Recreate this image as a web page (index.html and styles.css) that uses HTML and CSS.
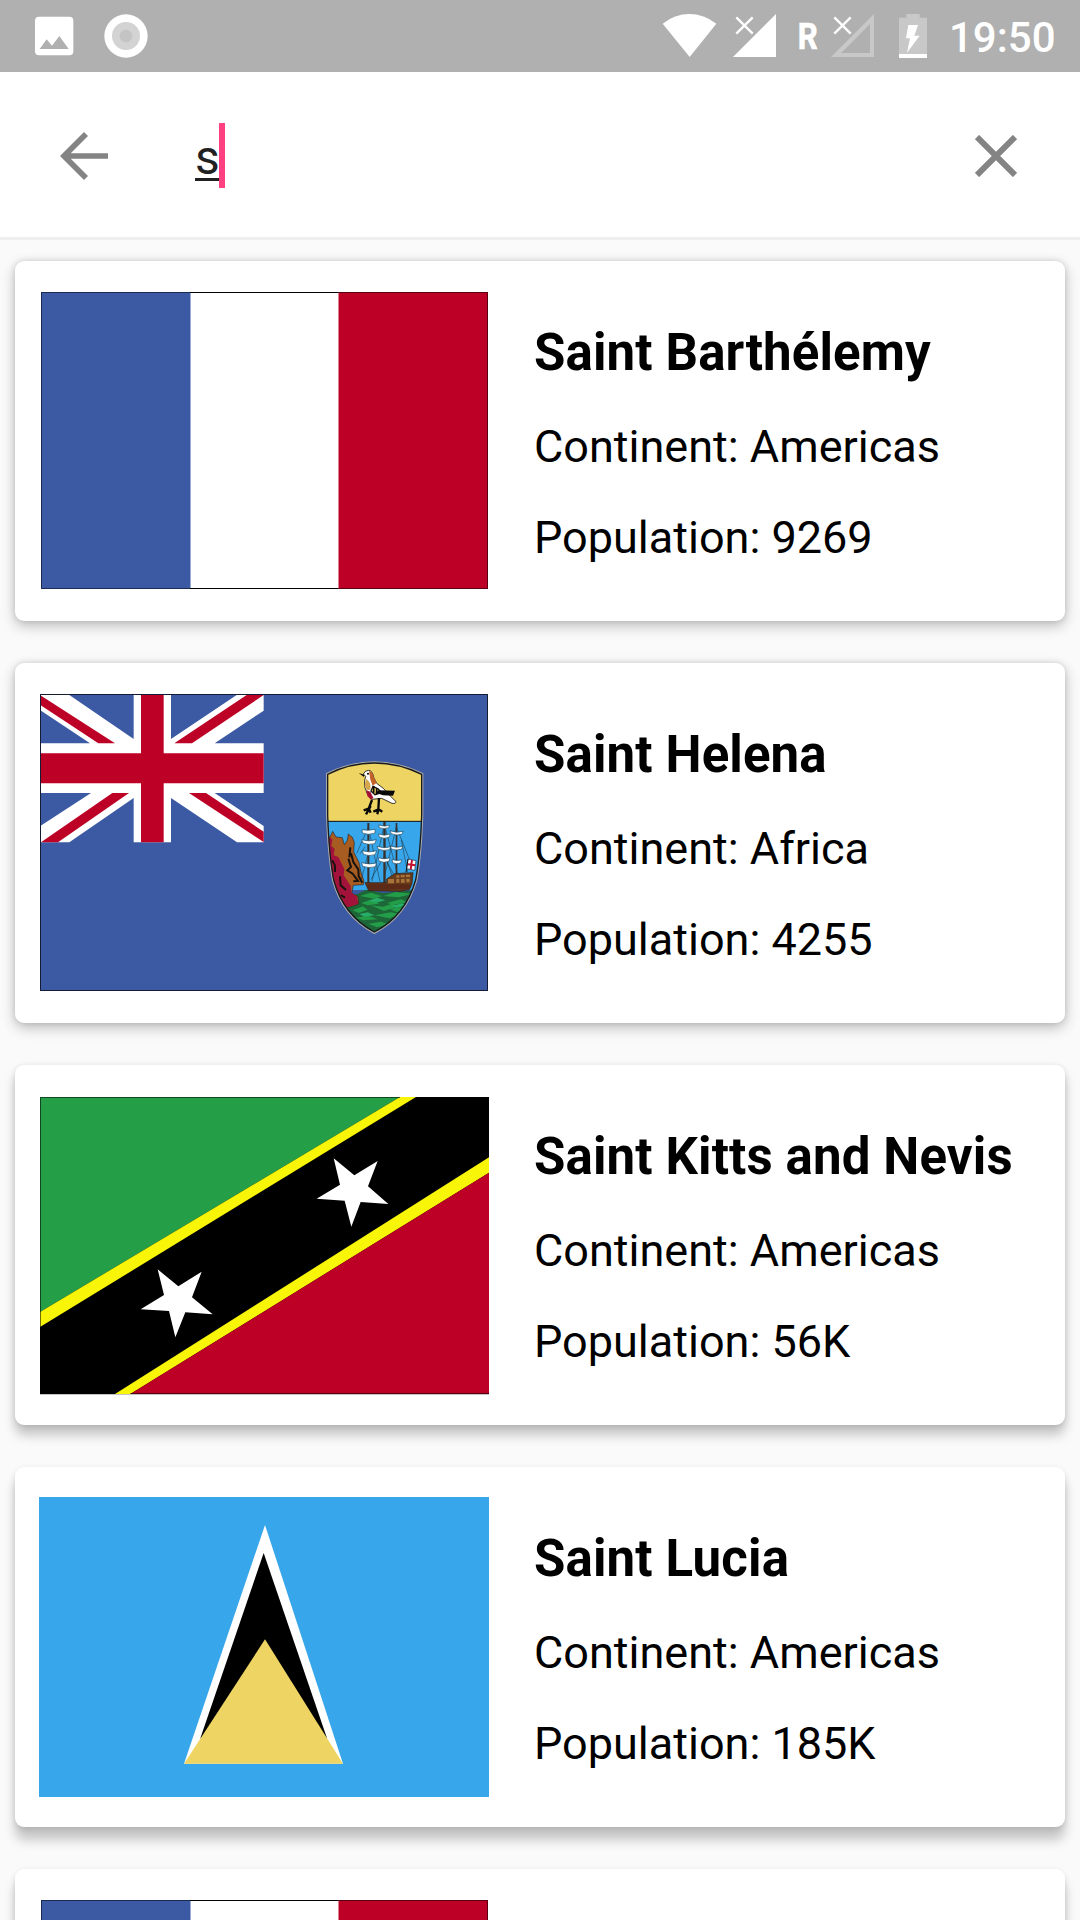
FILE: index.html
```html
<!DOCTYPE html>
<html lang="en">
<head>
<meta charset="utf-8">
<title>Countries</title>
<link rel="stylesheet" href="styles.css">
</head>
<body>
<header class="status">
  <svg class="status-left" viewBox="0 0 600 216">
    <path fill="#fff" fill-rule="evenodd" d="M117 50H208Q220 50 220 62V154Q220 166 208 166H117Q105 166 105 154V62Q105 50 117 50ZM119 147H206L178 108L156 137L140 118Z"/>
    <circle cx="378" cy="108" r="65" fill="#fff"/><circle cx="378" cy="108" r="42" fill="#d3d3d3"/><circle cx="378" cy="108" r="19" fill="#c4c4c4"/>
  </svg>
  <svg class="status-right" viewBox="0 0 900 216">
    <path fill="#fff" d="M68 71Q104 42 148 42T229 71L149 171Z"/>
    <path fill="#fff" d="M408 42V171H279Z"/>
    <path stroke="#fff" stroke-width="7" fill="none" d="M289 52L338 101M338 52L289 101M583 52L632 101M632 52L583 101"/>
    <text class="roaming" x="473" y="147" textLength="60" lengthAdjust="spacingAndGlyphs">R</text>
    <path fill="#c8c8c8" fill-rule="evenodd" d="M702 42V171H573ZM690 72L604 159H690Z"/>
    <path fill="#c8c8c8" d="M799 42H839V53H861V162H777V53H799Z"/>
    <path fill="#fff" d="M777 162H861V174H777ZM805 75H834L823 107H839L801 158L810 115H798Z"/>
  </svg>
  <span class="clock">19:50</span>
</header>

<div class="toolbar">
  <svg class="back" viewBox="0 0 144 144" fill="none" stroke="#848484" stroke-width="17"><path d="M78 6L12 72L78 138M12 72H144"/></svg>
  <div class="query"><span class="typed">s</span><span class="caret"></span></div>
  <svg class="clear" viewBox="0 0 126 126" fill="none" stroke="#848484" stroke-width="18"><path d="M6 6L120 120M120 6L6 120"/></svg>
</div>

<main class="list">
  <article class="card">
    <svg class="flag" viewBox="0 0 450 300">
      <path fill="#3c5aa3" d="M2 1H151.500V298H2Z"/><path fill="#bd0025" d="M299.500 1H449V298H299.500Z"/>
      <path fill="none" stroke="#000" d="M151 1.500H299.500M151 297.500H299.500"/>
      <path fill="none" stroke="#1c2b50" d="M151 1.500H2.500V297.500H151"/>
      <path fill="none" stroke="#590011" d="M299.500 1.500H448.500V297.500H299.500"/>
    </svg>
    <div class="info"><h2>Saint Barthélemy</h2><p>Continent: Americas</p><p>Population: 9269</p></div>
  </article>

  <article class="card">
    <svg class="flag" viewBox="0 0 1350 900">
      <path fill="#3c5aa3" d="M3 3H1347V894H3Z"/>
      <g transform="translate(-57 -39)">
        <path fill="#fff" d="M61 45H148L341 177V45H453V177L650 45H731V92L584 190H731V339H584L731 438V487H651L453 354V487H341V354L148 487H61V438L213 339H61V190H210L61 91Z"/>
        <path fill="#bd0025" d="M363 45H431V220H731V310H431V487H363V310H61V220H363ZM61 46L285 190H235L61 75ZM680 45H731L516 190H463ZM327 339L114 487H63L277 339ZM507 339H558L731 455V486Z"/>
      </g>
      <path fill="none" stroke="#141c33" stroke-width="3" d="M4.500 4.500H1345.500V892.500H4.500Z"/>
      <g transform="translate(783 141)">
        <clipPath id="shield"><path d="M81 102Q150 67 223 67T367 102V225Q363 345 349 421Q318 530 223 579Q128 528 99 421Q85 345 81 225Z"/></clipPath>
        <g clip-path="url(#shield)">
          <path fill="#eed463" d="M75 60H375V244H75Z"/>
          <path fill="#38a6ea" d="M75 244H375V450H75Z"/>
          <path fill="#1d6637" d="M75 470L170 463L198 449L250 459L375 447V590H75Z"/>
          <path fill="#249d48" d="M180 468l32-10 34 10-24 8zM250 468l36-12 52 5-42 11zM184 489l28-10 26 12-35 5zM260 489l42-11 21 8-40 8zM158 511l31-12 14 10-27 10zM212 496l37 4 26-9 20 8-43 14zM224 526l48-9 30 6-34 12zM167 533l38-6 28 11-43 3zM205 551l37-6 27 8-38 9zM270 507l31-6 20 7-31 8z"/>
          <path fill="#28ad68" d="M206 482l25-9 25 8-27 7zM275 498l32-8 14 6-33 7zM178 522l25-5 21 9-32 4z"/>
          <path fill="#a75c22" stroke="#111" stroke-width="1.500" d="M80 298L91 289L98 274L108 291L127 293L133 314L142 300L145 282L157 292L163 307L161 336L177 367L183 397L192 424L190 434L160 436L155 460L174 470L176 492L150 501L120 500L80 440Z"/>
          <path fill="#a3123a" d="M80 303L91 292L97 300L94 318L104 326L101 346L115 351L124 369L133 386L131 406L143 424L152 438L154 458L170 468L175 491L142 502L115 490L80 440Z"/>
          <path fill="#a75c22" d="M104 300L116 302L124 330L119 346L109 328ZM122 352L133 366L139 392L130 380ZM139 410L151 428L147 430Z"/>
          <path fill="none" stroke="#17120d" stroke-width="6" d="M97 361L105 377V396M120 409L122 436L138 450M122 465L135 473M145 356L153 381L142 391L158 401L174 423L160 424M153 340L160 366L175 388L176 409L187 428M151 322L148 352"/>
          <path fill="none" stroke="#18292f" stroke-width="1.500" d="M205 262L170 340M205 262L240 425M205 340L182 425M253 253L216 424M253 253L296 415M289 260L253 410M289 260L329 360M253 340L282 425M180 341L195 321M213 418L252 350L286 412M304 300L323 397"/>
          <path fill="#3a302a" d="M202 249H208V432H202ZM250 245H257V430H250ZM287 249H292V405H287Z"/>
          <path fill="#fff" stroke="#244b60" stroke-width="2" d="M186 269Q205 273 225 268V279Q206 287 187 279ZM185 299Q206 306 229 299L224 311Q205 316 189 309ZM188 332Q207 339 230 332L225 344Q207 350 190 343ZM185 368Q208 375 230 369L226 380Q207 386 188 379ZM236 255Q253 261 269 256L266 263Q252 269 238 263ZM235 282Q253 289 271 282L267 292Q252 298 238 291ZM231 319Q252 327 273 320L268 329Q252 334 235 328ZM235 353Q252 360 270 353L267 364Q251 370 237 363ZM270 272Q289 280 310 274L305 283Q288 288 274 281ZM271 318Q289 325 309 319L304 328Q287 332 274 327ZM276 358Q289 365 305 359L302 369Q289 374 278 368Z"/>
          <path fill="#683b1b" stroke="#2b180d" stroke-width="2" d="M195 428H260V417L284 401L339 398L336 431L329 448L302 454L206 452Z"/>
          <path fill="#5d2a18" d="M199 431L332 433L328 447L206 450Z"/>
          <path fill="#a8743a" d="M264 417H282V430H264ZM289 406H298V413H289ZM302 405H314V412H302ZM318 404H330V411H318ZM289 417H298V428H289ZM303 417H314V428H303ZM319 416H329V427H319Z"/>
          <path fill="#fff" stroke="#173044" stroke-width="2" d="M324 357L348 362L344 391L320 386Z"/>
          <path stroke="#c51230" stroke-width="6" d="M336 360L332 389M323 373L346 376"/>
          <path stroke="#111" stroke-width="3" d="M81 244H367M324 357L318 397"/>
          <path fill="#fff" stroke="#111" stroke-width="2.500" d="M190 102Q195 91 206 91Q218 92 221 112L230 130L250 145L267 164L287 184Q289 192 276 190L245 175L215 178Q198 161 194 140Q192 120 197 109Z"/>
          <path fill="#c4622a" d="M207 92Q219 94 221 112L230 128L218 137L211 119Z"/>
          <path fill="#d5a54b" d="M198 116Q215 126 211 149L201 151L194 137Z"/>
          <path fill="#a41335" d="M199 151L211 155L220 173L213 179L202 168Z"/>
          <path fill="#eed463" stroke="#111" stroke-width="4" d="M219 139L235 147L244 158L225 164L213 153Z"/>
          <path fill="#080808" d="M176 99L193 104L192 111ZM236 151L285 152L279 167L249 166L226 158Z"/>
          <path fill="none" stroke="#080808" stroke-width="7" d="M216 180L206 206M237 174L235 208M191 211L208 205L198 223M206 205L212 218M220 215L236 208L247 215M235 208L232 223"/>
          <path fill="none" stroke="#080808" stroke-width="5" d="M221 139V158M230 145V163"/>
          <circle cx="204" cy="101" r="3"/>
        </g>
        <path fill="none" stroke="#aaa9a6" stroke-width="4" d="M80 101Q150 66 223 66T368 101V225Q364 345 350 421Q319 530 223 580Q127 529 98 421Q84 345 80 225Z"/>
        <path fill="none" stroke="#171b1d" stroke-width="4" d="M83 103Q150 69 223 69T365 103V225Q361 345 347 420Q316 528 223 576Q130 526 101 420Q87 345 83 225Z"/>
      </g>
    </svg>
    <div class="info"><h2>Saint Helena</h2><p>Continent: Africa</p><p>Population: 4255</p></div>
  </article>

  <article class="card raised">
    <svg class="flag" viewBox="57 45 1350 900">
      <path fill="#000" d="M60 51H1407V942H60Z"/>
      <path fill="#259e48" d="M60 51H1140L60 696Z"/>
      <path fill="#f8f509" d="M1140 51H1188L60 741V696ZM1407 232V278L331 942H285Z"/>
      <path fill="#bd0025" d="M1407 278V942H331Z"/>
      <path fill="#fff" d="M941 235L1003 286L1073 243L1044 319L1105 372L1022 366L994 440L974 362L890 356L960 314ZM413 568L475 619L545 575L516 652L578 703L496 697L466 772L447 693L362 688L432 645Z"/>
      <path fill="none" stroke="#000" stroke-opacity=".55" stroke-width="3" d="M1140 52.500H61.500V942M331 940.500H1407"/>
      <path fill="none" stroke="#c4c4c4" stroke-width="3" d="M60 943.500H1407"/>
    </svg>
    <div class="info"><h2>Saint Kitts and Nevis</h2><p>Continent: Americas</p><p>Population: 56K</p></div>
  </article>

  <article class="card high">
    <svg class="flag" viewBox="57 51 1350 900">
      <path fill="#38a6ea" d="M57 51H1407V951H57Z"/>
      <path fill="#fff" d="M735 135L969 851H492Z"/>
      <path fill="#000" d="M731 219L921 775H541Z"/>
      <path fill="#eed463" d="M735 478L969 851H492Z"/>
    </svg>
    <div class="info"><h2>Saint Lucia</h2><p>Continent: Americas</p><p>Population: 185K</p></div>
  </article>

  <article class="card high">
    <svg class="flag" viewBox="0 0 450 300">
      <path fill="#3c5aa3" d="M2 1H151.500V298H2Z"/><path fill="#bd0025" d="M299.500 1H449V298H299.500Z"/>
      <path fill="none" stroke="#000" d="M151 1.500H299.500M151 297.500H299.500"/>
      <path fill="none" stroke="#1c2b50" d="M151 1.500H2.500V297.500H151"/>
      <path fill="none" stroke="#590011" d="M299.500 1.500H448.500V297.500H299.500"/>
    </svg>
  </article>
</main>
</body>
</html>
```
FILE: styles.css
```css
* { box-sizing: border-box; }
body {
  margin: 0;
  height: 1920px;
  overflow: hidden;
  display: flex;
  flex-direction: column;
  background: #fafafa;
  color: #000;
  font-family: Roboto, "Liberation Sans", sans-serif;
}
svg { display: block; flex: none; }

.status {
  flex: none;
  height: 72px;
  display: flex;
  background: #b0b0b0;
  color: #fff;
}
.status-left { width: 200px; height: 72px; margin-right: 440px; }
.status-right { width: 300px; height: 72px; }
.roaming { font-size: 110px; font-weight: 700; fill: #fff; stroke: #fff; stroke-width: 2px; }
.clock { padding-left: 9px; font-size: 42px; font-weight: 500; line-height: 75px; }

.toolbar {
  flex: none;
  height: 168px;
  display: flex;
  align-items: center;
  padding: 0 63px 0 60px;
  border-bottom: 3px solid #eee;
  background: #fff;
}
.back { width: 48px; height: 48px; margin-top: 2px; }
.query { flex: 1; display: flex; align-items: center; padding: 2px 0 0 87px; }
.typed {
  height: 65px;
  color: #212121;
  font-size: 48px;
  line-height: 69px;
  text-decoration: underline;
  text-decoration-thickness: 3px;
  text-underline-offset: 4px;
  text-decoration-skip-ink: none;
}
.caret { width: 6px; height: 65px; margin-left: -1px; background: #ff4081; }
.clear { width: 42px; height: 42px; margin-top: 2px; }

.list {
  flex: 1;
  min-height: 0;
  overflow: hidden;
  display: flex;
  flex-direction: column;
  gap: 42px;
  padding: 21px 15px 0;
}
.card {
  flex: none;
  height: 360px;
  display: flex;
  gap: 45px;
  padding: 30px 24px;
  border-radius: 9px;
  background: #fff;
  box-shadow: 0 5px 14px rgba(0, 0, 0, .24), 0 0 6px rgba(0, 0, 0, .13);
}
.card.raised { box-shadow: 0 10px 12px rgba(0, 0, 0, .22), 0 1px 6px rgba(0, 0, 0, .12); }
.card.high { box-shadow: 0 13px 12px rgba(0, 0, 0, .21), 0 2px 6px rgba(0, 0, 0, .11); }
.flag { width: 450px; height: 300px; }
.info { padding-top: 32px; white-space: nowrap; }
.info h2 { margin: 0; font-size: 51px; font-weight: 700; line-height: 60px; letter-spacing: .13px; }
.info p { margin: 0; padding-top: 38px; font-size: 45px; line-height: 53px; }
.info h2 + p { padding-top: 37px; }
```
